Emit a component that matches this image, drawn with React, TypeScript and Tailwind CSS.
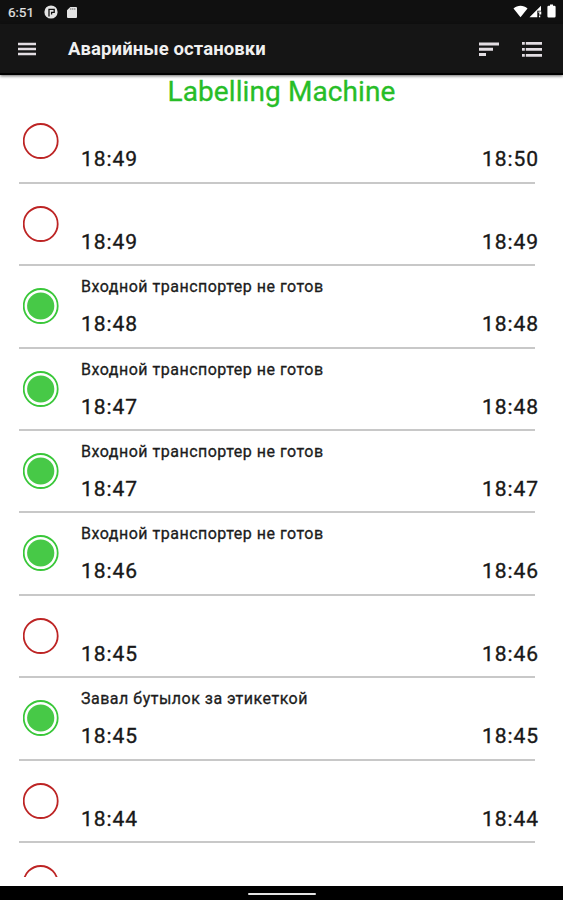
import React from 'react';

interface Stop {
  reason: string;
  start: string;
  end: string;
}

const stops: Stop[] = [
  { reason: '', start: '18:49', end: '18:50' },
  { reason: '', start: '18:49', end: '18:49' },
  { reason: 'Входной транспортер не готов', start: '18:48', end: '18:48' },
  { reason: 'Входной транспортер не готов', start: '18:47', end: '18:48' },
  { reason: 'Входной транспортер не готов', start: '18:47', end: '18:47' },
  { reason: 'Входной транспортер не готов', start: '18:46', end: '18:46' },
  { reason: '', start: '18:45', end: '18:46' },
  { reason: 'Завал бутылок за этикеткой', start: '18:45', end: '18:45' },
  { reason: '', start: '18:44', end: '18:44' },
  { reason: '', start: '', end: '' },
];

function StatusBar() {
  return (
    <div className="flex h-6 shrink-0 items-center justify-between bg-[#101010] pl-2 pr-[7px] text-[#e4e4e4]">
      <div className="flex items-center">
        <span className="w-[36px] text-[13.5px] leading-6 [-webkit-text-stroke:0.2px_#e4e4e4]">6:51</span>
        <svg className="h-[14px] w-[14px]" viewBox="0 0 14 14">
          <circle cx="7" cy="7" r="6.6" fill="currentColor" />
          <path d="M5 11.5V4.4h5.2v3H7.6v2" fill="none" stroke="#101010" strokeWidth="1.3" />
        </svg>
        <svg className="ml-2 h-[13px] w-3" viewBox="0 0 12 13">
          <path d="M4.3 1H10a1 1 0 0 1 1 1v9a1 1 0 0 1-1 1H2a1 1 0 0 1-1-1V4.3z" fill="currentColor" />
          <path d="M4.8 2v2M6.8 2v2M8.8 2v2" stroke="#777" strokeWidth="0.8" />
        </svg>
      </div>
      <div className="mt-[-2px] flex items-center text-white">
        <svg className="h-[13px] w-[15px]" viewBox="0 0 15 13">
          <path d="M0.5 3.4C4.6-.1 10.4-.1 14.5 3.4L7.5 12.2z" fill="currentColor" />
        </svg>
        <svg className="ml-px h-[13px] w-[13px]" viewBox="0 0 13 13">
          <path d="M0.5 12.2L12 .8v5H8.3v6.4z" fill="currentColor" />
          <path d="M9.4 7.2h2.2v1.6H10M10.6 10.5v1.7" fill="none" stroke="currentColor" strokeWidth="1.3" />
        </svg>
        <svg className="ml-[5px] h-[14px] w-[9px]" viewBox="0 0 9 14">
          <path d="M3 .4h3v1.3h1.4a1.2 1.2 0 0 1 1.2 1.2v9.4a1.2 1.2 0 0 1-1.2 1.2H1.6a1.2 1.2 0 0 1-1.2-1.2V2.9a1.2 1.2 0 0 1 1.2-1.2H3z" fill="currentColor" />
        </svg>
      </div>
    </div>
  );
}

function AppBar() {
  return (
    <header className="z-10 flex h-[51px] shrink-0 items-center border-b-2 border-black bg-[#151515] pl-[18px] pr-[21px] text-[#e2dde2] shadow-[0_1px_3px_rgba(0,0,0,0.6)]">
      <svg className="h-[14px] w-[18px]" viewBox="0 0 18 14">
        <path d="M0 2h18M0 7h18M0 12h18" stroke="currentColor" strokeWidth="2.5" />
      </svg>
      <h1 className="ml-8 mt-px grow text-[18.5px] font-bold leading-6 tracking-[0.1px] text-[#f0f0f0]">
        Аварийные остановки
      </h1>
      <svg className="h-4 w-5" viewBox="0 0 20 16">
        <path d="M0 3h20M0 8.3h14M0 13.6h7" stroke="currentColor" strokeWidth="3" />
      </svg>
      <svg className="ml-[23px] h-[18px] w-5" viewBox="0 0 20 18">
        <path d="M0 3.3h2.8M0 9.3h2.8M0 15.3h2.8M3.8 3.3h16.2M3.8 9.3h16.2M3.8 15.3h16.2" stroke="currentColor" strokeWidth="2.8" />
      </svg>
    </header>
  );
}

function StatusCircle({ resolved }: { resolved: boolean }) {
  return (
    <svg className="mt-[22px] h-9 w-9 shrink-0" viewBox="0 0 36 36">
      <circle
        cx="17.7"
        cy="18"
        r="17"
        fill="none"
        strokeWidth="1.8"
        className={resolved ? 'stroke-[#39c739]' : 'stroke-[#bd2424]'}
      />
      {resolved && <circle cx="17.7" cy="18" r="13.6" fill="#47c947" />}
    </svg>
  );
}

function StopRow({ stop }: { stop: Stop }) {
  return (
    <li className="ml-[19px] mr-7 flex h-[82.4px] shrink-0 border-b-2 border-[#c8c8c8] pl-1">
      <StatusCircle resolved={stop.reason !== ''} />
      <div className="-mr-1 ml-[22px] grow">
        <p className="mt-[11px] h-5 text-[16px] leading-5 tracking-[0.5px] text-[#1c1c1c] [-webkit-text-stroke:0.3px_#1c1c1c]">
          {stop.reason}
        </p>
        <div className="mt-[15px] flex justify-between text-[21px] leading-6 tracking-[0.95px] text-[#181818] [-webkit-text-stroke:0.35px_#181818]">
          <span>{stop.start}</span>
          <span>{stop.end}</span>
        </div>
      </div>
    </li>
  );
}

export default function App() {
  return (
    <div className="flex h-[900px] w-[563px] flex-col overflow-hidden bg-white font-['Roboto','Noto_Sans',sans-serif]">
      <StatusBar />
      <AppBar />
      <main className="flex h-[802px] shrink-0 flex-col overflow-hidden">
        <h2 className="h-[26.4px] shrink-0 text-center text-[28px] leading-[34px] tracking-[0.1px] text-[#27bd27] [-webkit-text-stroke:0.3px_#27bd27]">
          Labelling Machine
        </h2>
        <ul className="flex flex-col">
          {stops.map((stop, index) => (
            <StopRow key={index} stop={stop} />
          ))}
        </ul>
      </main>
      <div className="mt-auto flex h-[14px] shrink-0 items-center justify-center bg-black pt-0.5">
        <div className="h-0.5 w-[68px] rounded-full bg-[#e4e4e4]" />
      </div>
    </div>
  );
}
